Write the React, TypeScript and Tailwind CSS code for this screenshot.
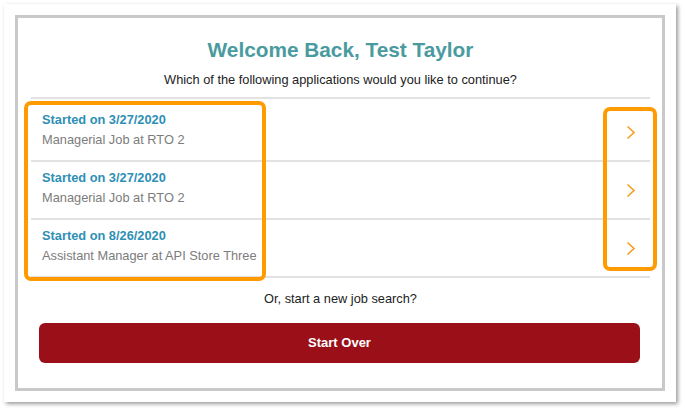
const apps = [
  { date: "3/27/2020", title: "Managerial Job at RTO 2" },
  { date: "3/27/2020", title: "Managerial Job at RTO 2" },
  { date: "8/26/2020", title: "Assistant Manager at API Store Three" },
];

const Chevron = () => (
  <svg width="10" height="15" viewBox="0 0 10 15" fill="none">
    <polyline
      points="1.5,1.5 8,7.5 1.5,13.5"
      stroke="#f79d1c"
      strokeWidth="1.6"
      strokeLinejoin="miter"
    />
  </svg>
);

const App = () => {
  return (
    <div
      className="relative w-[685px] h-[411px] bg-white pt-[4px] pl-[4px]"
      style={{ fontFamily: '"Liberation Sans", Arial, sans-serif' }}
    >
      <div className="w-[672px] h-[398px] bg-white shadow-[2px_2px_4px_rgba(0,0,0,0.4)] p-[11px]">
        <div className="h-[376px] border-[3px] border-[#c9c9c9] pl-[13px] pr-[12px] pt-[20px]">
          <h1 className="text-center text-[20.8px] leading-[24px] font-bold text-[#4a9ba0]">
            Welcome Back, Test Taylor
          </h1>
          <p className="mt-[10px] text-center text-[12.8px] leading-[16px] text-[#222]">
            Which of the following applications would you like to continue?
          </p>
          <div className="mt-[9px] h-[2px] bg-[#e2e2e2]" />

          <div className="pt-[5px]">
            {apps.map((app, i) => (
              <div
                key={i}
                className="flex justify-between h-[58px] border-b-2 border-[#e2e2e2] pl-[11px] pr-[14px]"
              >
                <div className="flex flex-col pt-[7.5px]">
                  <span className="text-[12.8px] leading-[16px] font-bold text-[#2e8fb5]">
                    Started on {app.date}
                  </span>
                  <span className="mt-[4px] text-[12.8px] leading-[16px] text-[#7c7c7c]">
                    {app.title}
                  </span>
                </div>
                <div className="self-center">
                  <Chevron />
                </div>
              </div>
            ))}
          </div>

          <p className="mt-[13px] text-center text-[12.8px] leading-[16px] text-[#222]">
            Or, start a new job search?
          </p>
          <button className="mt-[16px] mx-[8px] w-[601px] h-[40px] rounded-[6px] bg-[#9b0f18] text-white text-[13px] font-bold">
            Start Over
          </button>
        </div>
      </div>

      <div className="absolute left-[24px] top-[101px] w-[242px] h-[180px] border-4 border-[#ff9a00] rounded-[7px]" />
      <div className="absolute left-[603px] top-[107px] w-[54px] h-[164px] border-4 border-[#ff9a00] rounded-[7px]" />
    </div>
  );
};

export default App;
